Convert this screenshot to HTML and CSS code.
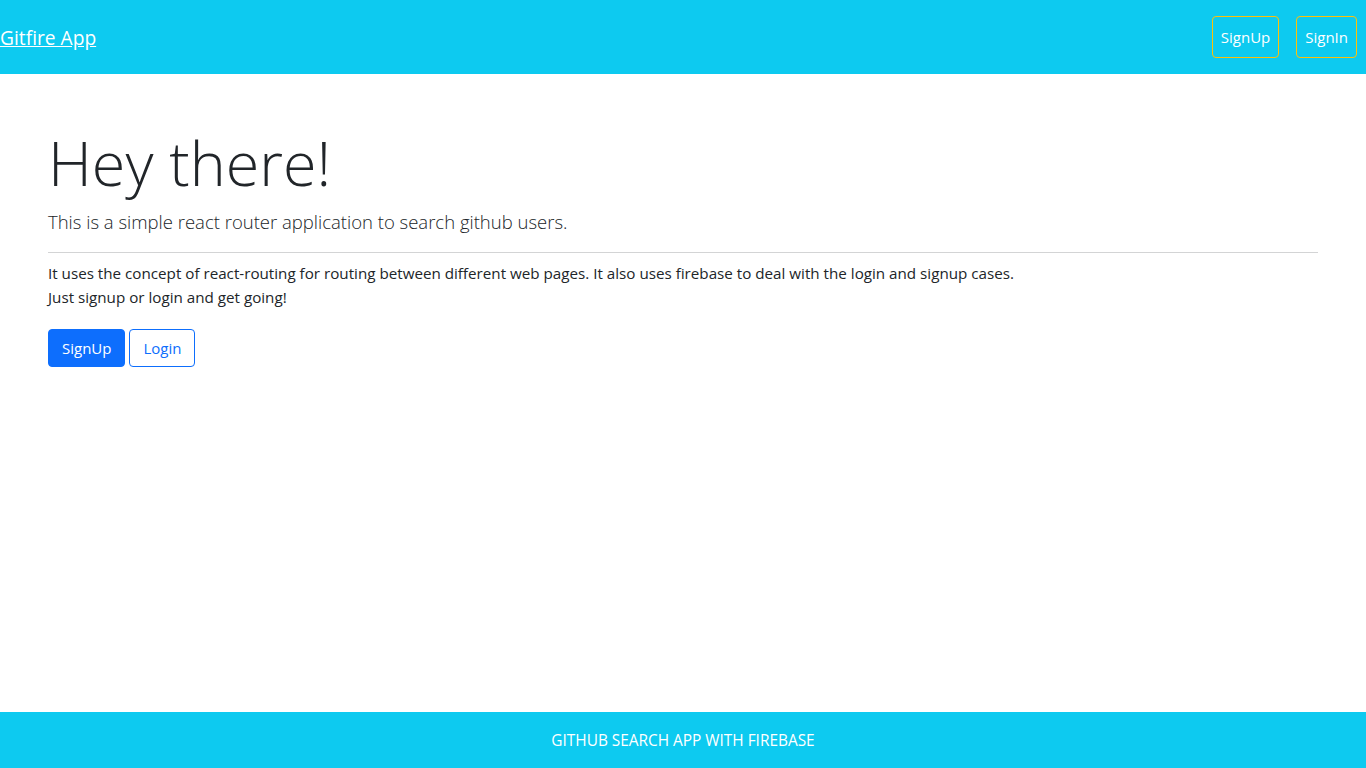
FILE: index.html
```html
<!DOCTYPE html>
<html lang="en">
<head>
<meta charset="utf-8">
<title>Gitfire App</title>
<link rel="stylesheet" href="styles.css">
</head>
<body>
<nav class="navbar">
  <a class="brand" href="#">Gitfire App</a>
  <div class="nav-actions">
    <a class="btn btn-warning-outline" href="#">SignUp</a>
    <a class="btn btn-warning-outline" href="#">SignIn</a>
  </div>
</nav>
<main class="jumbo">
  <h1 class="display">Hey there!</h1>
  <p class="lead">This is a simple react router application to search github users.</p>
  <hr class="rule">
  <p class="body-text">It uses the concept of react-routing for routing between different web pages. It also uses firebase to deal with the login and signup cases.<br>Just signup or login and get going!</p>
  <div class="actions">
    <a class="btn-main btn-primary" href="#">SignUp</a>
    <a class="btn-main btn-outline-primary" href="#">Login</a>
  </div>
</main>
<footer class="footer">GITHUB SEARCH APP WITH FIREBASE</footer>
</body>
</html>
```
FILE: styles.css
```css
* { box-sizing: border-box; }
html, body { height: 100%; }
body {
  margin: 0;
  font-family: "Open Sans", "Noto Sans", sans-serif;
  font-size: 16px;
  line-height: 1.5;
  color: #212529;
  background: #fff;
  display: flex;
  flex-direction: column;
}
.navbar {
  height: 74px;
  background: #0dcaf0;
  display: flex;
  align-items: center;
  justify-content: space-between;
  padding: 0 9px 0 0;
  flex-shrink: 0;
}
.brand {
  color: #fff;
  font-size: 19.2px;
  text-decoration: underline;
  line-height: 30px;
  padding-top: 2px;
}
.nav-actions {
  display: flex;
  gap: 17px;
}
.btn {
  display: inline-flex;
  align-items: center;
  justify-content: center;
  height: 42px;
  padding: 0 8px;
  border: 1px solid #ffc107;
  border-radius: 4px;
  color: #fff;
  text-decoration: none;
  font-size: 15px;
}
.jumbo {
  flex: 1;
  padding: 52px 48px 0;
}
.display {
  margin: 0 0 9px;
  font-size: 61px;
  font-weight: 300;
  line-height: 1.2;
}
.lead {
  margin: 0;
  font-size: 18.5px;
  font-weight: 300;
  line-height: 28px;
}
.rule {
  margin: 16px 0 8px;
  border: 0;
  border-top: 1px solid #d3d4d5;
}
.body-text {
  margin: 0 0 20px;
  font-size: 15.2px;
  line-height: 24px;
}
.actions {
  display: flex;
  gap: 4px;
}
.btn-main {
  display: inline-flex;
  align-items: center;
  height: 38px;
  padding: 0 13px;
  border: 1px solid #0d6efd;
  border-radius: 4px;
  font-size: 15px;
  text-decoration: none;
}
.btn-primary { background: #0d6efd; color: #fff; }
.btn-outline-primary { background: #fff; color: #0d6efd; }
.footer {
  height: 56px;
  background: #0dcaf0;
  color: #fff;
  font-size: 15.4px;
  display: flex;
  align-items: center;
  justify-content: center;
  flex-shrink: 0;
  padding-top: 2px;
}
```
